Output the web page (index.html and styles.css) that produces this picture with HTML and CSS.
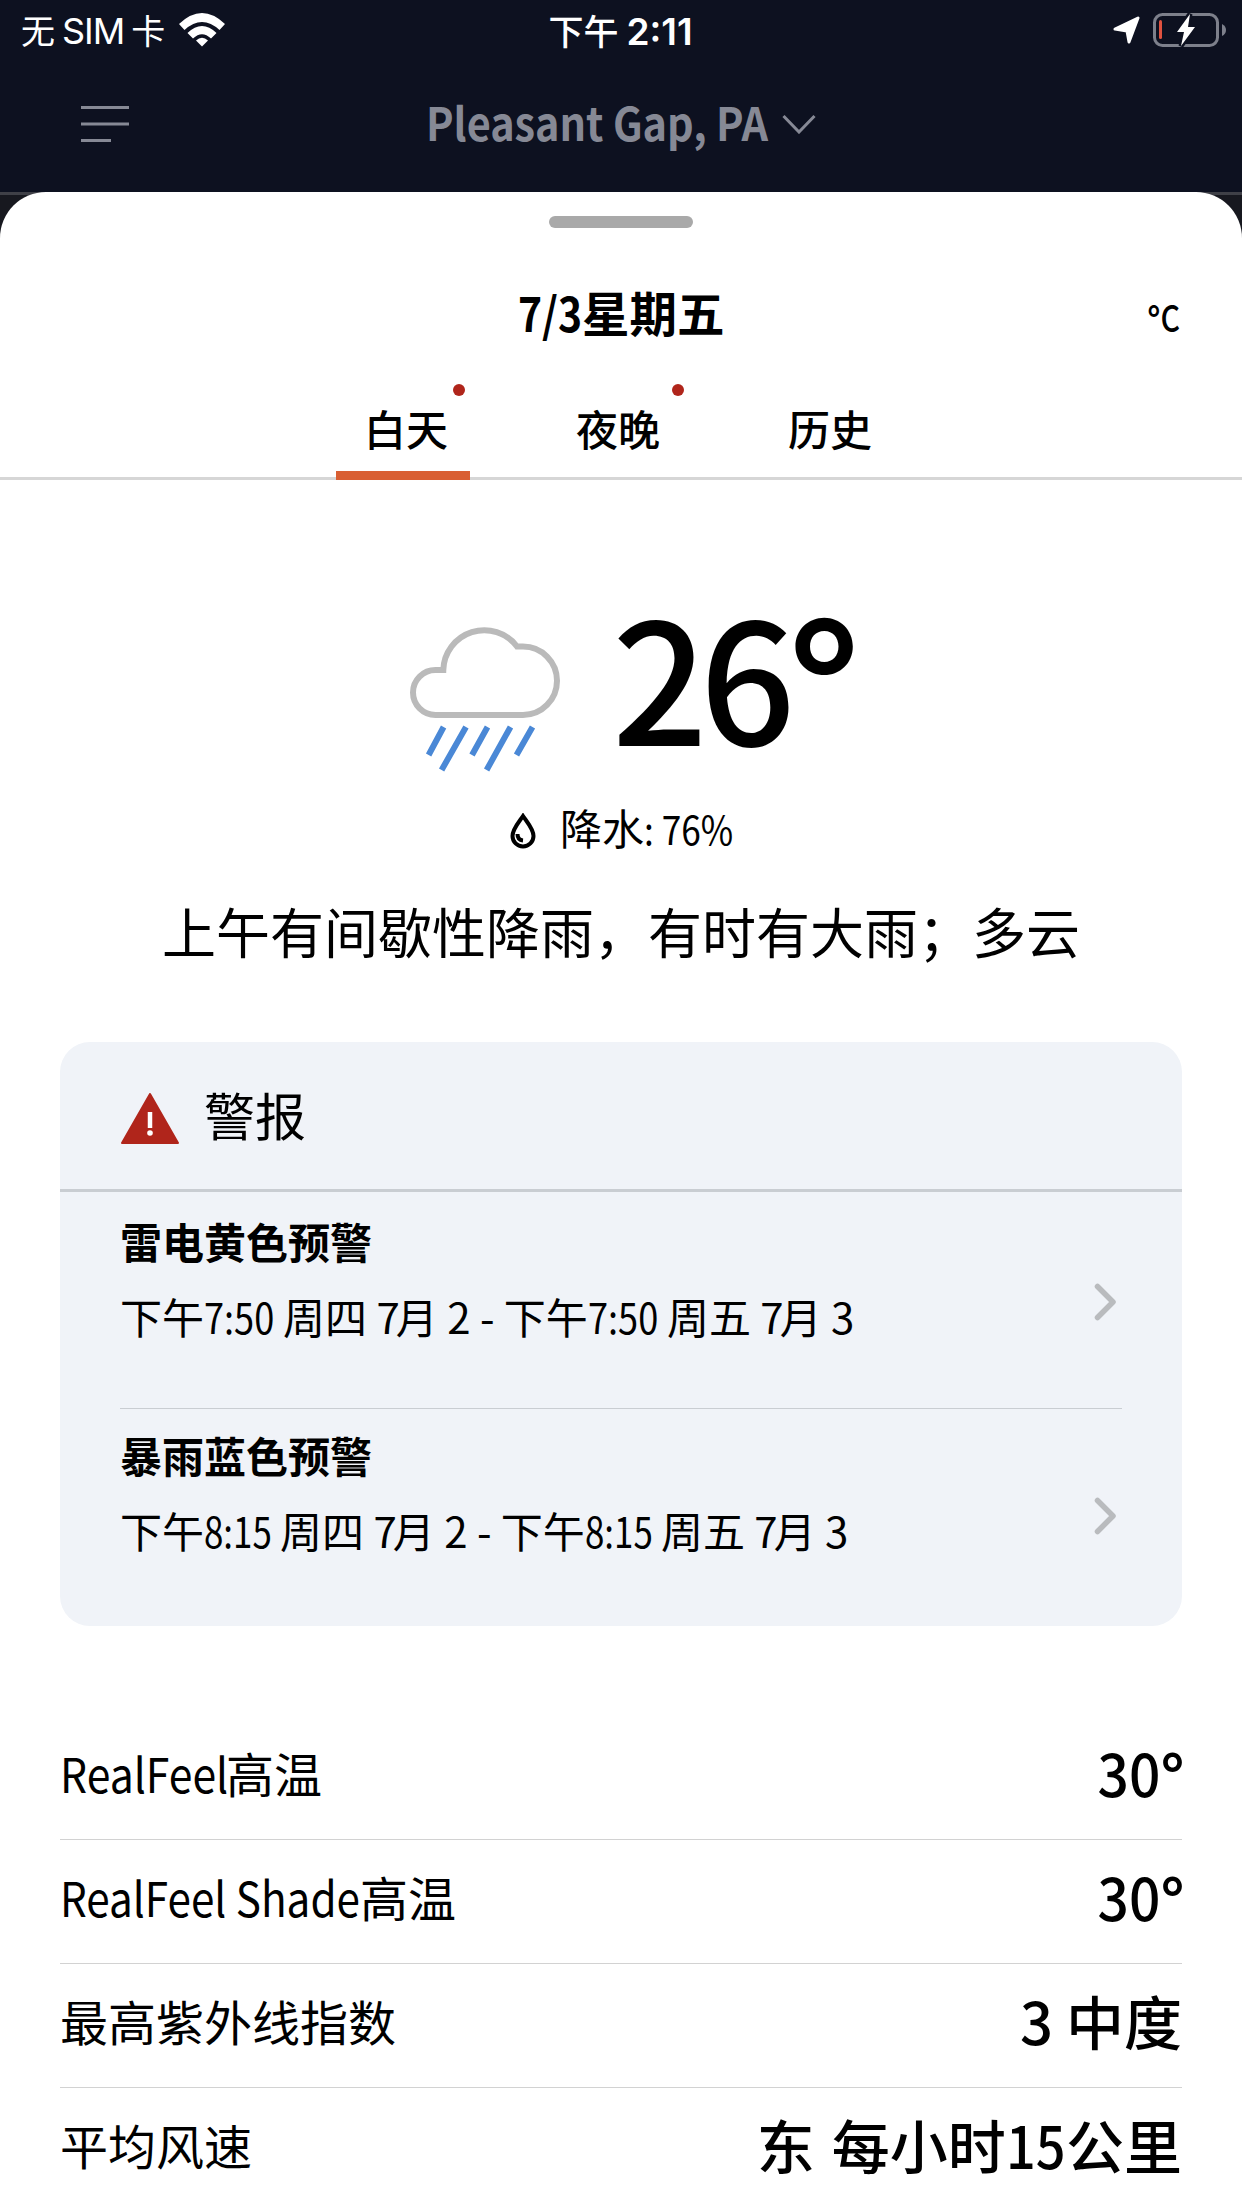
FILE: index.html
```html
<!DOCTYPE html>
<html lang="zh-CN">
<head>
<meta charset="UTF-8">
<meta name="viewport" content="width=device-width, initial-scale=1.0">
<title>Pleasant Gap, PA</title>
<link rel="stylesheet" href="styles.css">
</head>
<body>
<header class="header">
    <div class="status">
        <div class="status-left">
            <span class="carrier">无<span class="carrier-sim">SIM</span>卡</span>
            <svg class="wifi" width="46" height="34" viewBox="0 0 46 34">
                <path d="M0 11Q23 -11 46 11L40.500 17Q23 1 5.500 17Z" fill="#fff"/>
                <path d="M8.500 20Q23 6 37.500 20L32 25.500Q23 17 14 25.500Z" fill="#fff"/>
                <path d="M17 27.500Q23 22 29 27.500L23 33.500Z" fill="#fff"/>
            </svg>
        </div>
        <div class="clock">下午<span class="clock-time">2:11</span></div>
        <div class="status-right">
            <svg class="arrow" width="28" height="28" viewBox="0 0 28 28">
                <path d="M2 13L25 2L16 26L14 15Z" fill="#fff" stroke="#fff" stroke-width="3" stroke-linejoin="round"/>
            </svg>
            <svg width="73" height="34" viewBox="0 0 73 34">
                <rect x="1.500" y="1.500" width="63" height="31" rx="8" fill="none" stroke="#7d808b" stroke-width="3"/>
                <path d="M69 11Q73 13 73 17T69 23Z" fill="#7d808b"/>
                <rect x="6" y="7" width="3" height="19" rx="1.500" fill="#e0523f"/>
                <path class="bolt" d="M37 1L24 19H31L28 33L42 14H35Z" fill="#fff" stroke="#0d1120" stroke-width="5"/>
            </svg>
        </div>
    </div>
    <div class="navbar">
        <svg class="menu" width="48" height="36" viewBox="0 0 48 36">
            <path d="M0 1.500H48M0 18H48M0 34.500H30" stroke="#868995" stroke-width="3"/>
        </svg>
        <div class="location">
            <span class="narrow place">Pleasant Gap, PA</span>
            <svg width="34" height="20" viewBox="0 0 34 20">
                <path d="M1.500 2L17 18L32.500 2" fill="none" stroke="#868995" stroke-width="3"/>
            </svg>
        </div>
    </div>
</header>

<main class="sheet">
    <div class="handle"></div>
    <div class="sheet-head">
        <h1><span class="narrow date">7/3</span>星期五</h1>
        <span class="narrow unit"><span class="degree">°</span>C</span>
    </div>
    <nav class="tabs">
        <div class="tab active">白天<i class="dot"></i></div>
        <div class="tab">夜晚<i class="dot"></i></div>
        <div class="tab">历史</div>
    </nav>

    <section class="current">
        <div class="temp-row">
            <svg class="cloud" width="152" height="146" viewBox="409 627 152 146">
                <path d="M435.500 715A22.500 22.500 0 0 1 435.500 670H443.300A41 41 0 0 1 517 646.500H523A34 34.250 0 0 1 523 715Z" fill="none" stroke="#bababa" stroke-width="6"/>
                <path d="M443.600 727L428.600 755M466 727L441.600 770M487.500 727L472 755M510.500 727L486.600 770M532.500 727L516.500 755" stroke="#4a88d6" stroke-width="6"/>
            </svg>
            <div class="temp">26<span class="degree">°</span></div>
        </div>
        <div class="precip">
            <svg class="drop" width="26" height="36" viewBox="0 0 26 36">
                <path d="M13 3C9 9 2.500 16 2.500 23A10.500 10.500 0 0 0 23.500 23C23.500 16 17 9 13 3Z" fill="none" stroke="#000" stroke-width="4"/>
                <path d="M7.500 21Q7.500 27 13 27.500" fill="none" stroke="#000" stroke-width="4"/>
            </svg>
            <span class="precip-text">降水<span class="narrow precip-value">: 76%</span></span>
        </div>
        <p class="summary">上午有间歇性降雨，有时有大雨；多云</p>
    </section>

    <section class="alerts">
        <div class="alerts-head">
            <svg class="warning" width="58" height="52" viewBox="0 0 58 52">
                <path d="M29 1L57 50H1Z" fill="#b0251b" stroke="#b0251b" stroke-width="2" stroke-linejoin="round"/>
                <path d="M29 19V35" stroke="#fff" stroke-width="4.500"/>
                <circle cx="29" cy="40" r="2.800" fill="#fff"/>
            </svg>
            <h2>警报</h2>
        </div>
        <div class="alert">
            <div>
                <h3>雷电黄色预警</h3>
                <p>下午<span class="narrow time">7:50</span> 周四 <span class="month">7</span>月 2 - 下午<span class="narrow time">7:50</span> 周五 <span class="month">7</span>月 3</p>
            </div>
            <svg class="chevron" width="23" height="38" viewBox="0 0 23 38">
                <path d="M3.500 3.500L19 19L3.500 34.500" fill="none" stroke="#b9bbbe" stroke-width="5.500" stroke-linecap="round" stroke-linejoin="round"/>
            </svg>
        </div>
        <div class="alert">
            <div>
                <h3>暴雨蓝色预警</h3>
                <p>下午<span class="narrow time-short">8:15</span> 周四 <span class="month">7</span>月 2 - 下午<span class="narrow time-short">8:15</span> 周五 <span class="month">7</span>月 3</p>
            </div>
            <svg class="chevron" width="23" height="38" viewBox="0 0 23 38">
                <path d="M3.500 3.500L19 19L3.500 34.500" fill="none" stroke="#b9bbbe" stroke-width="5.500" stroke-linecap="round" stroke-linejoin="round"/>
            </svg>
        </div>
    </section>

    <section class="details">
        <div class="detail"><span><span class="narrow realfeel">RealFeel</span>高温</span><strong class="narrow degrees">30<span class="degree">°</span></strong></div>
        <div class="detail"><span><span class="narrow realfeel-shade">RealFeel Shade</span>高温</span><strong class="narrow degrees">30<span class="degree">°</span></strong></div>
        <div class="detail"><span>最高紫外线指数</span><strong>3 中度</strong></div>
        <div class="detail"><span>平均风速</span><strong class="wind">东 每小时<span class="narrow speed">15</span>公里</strong></div>
    </section>
</main>
</body>
</html>
```
FILE: styles.css
```css
* {
    box-sizing: border-box;
}
body {
    margin: 0;
    width: 1242px;
    height: 2208px;
    overflow: hidden;
    background: #17181f;
    color: #000;
    font-family: "Noto Sans CJK SC", "Noto Sans", sans-serif;
}
h1, h2, h3, p {
    margin: 0;
}
svg {
    display: block;
    flex-shrink: 0;
}

/* condensed latin text and digits */
.narrow {
    display: inline-block;
    transform: scaleX(0.89);
    transform-origin: left center;
}
.degree {
    font-size: 1.08em;
    font-weight: 700;
    line-height: 1;
    vertical-align: -0.07em;
}

/* status bar and location */
.header {
    height: 195px;
    background: #0d1120;
    border-bottom: 3px solid #3f4047;
}
.status {
    display: grid;
    grid-template-columns: 1fr auto 1fr;
    height: 60px;
    padding: 0 16px 0 21px;
    color: #fff;
    font-size: 34px;
    line-height: 60px;
}
.status-left,
.status-right {
    display: flex;
}
.wifi {
    margin: 13px 0 0 14px;
}
.carrier-sim {
    margin: 0 7px;
    font-family: Inter, sans-serif;
    font-size: 36px;
    letter-spacing: -1px;
}
.clock {
    margin-left: -6px;
    font-size: 35px;
    font-weight: 500;
}
.clock-time {
    margin-left: 8px;
    font-family: Inter, sans-serif;
    font-size: 37px;
    font-weight: 600;
}
.status-right {
    justify-content: flex-end;
    gap: 12px;
    padding-top: 13px;
}
.arrow {
    margin-top: 3px;
}
.bolt {
    paint-order: stroke;
}
.navbar {
    display: grid;
    grid-template-columns: 1fr auto 1fr;
    height: 132px;
    padding: 0 81px;
}
.menu {
    margin-top: 46px;
}
.location {
    display: flex;
    align-items: center;
    gap: 14px;
    height: 128px;
    color: #868995;
    font-size: 46px;
    font-weight: 700;
}
.place {
    margin: 0 -38px 6px 0;
    transform: scaleX(0.9);
}

.sheet {
    height: 2016px;
    margin-top: -3px;
    padding-top: 24px;
    background: #fff;
    border-radius: 46px 46px 0 0;
    position: relative;
}
.handle {
    width: 144px;
    height: 12px;
    margin: 0 auto;
    border-radius: 6px;
    background: #a9a9a9;
}
.sheet-head {
    display: grid;
    grid-template-columns: 1fr auto 1fr;
    align-items: center;
    height: 144px;
    padding: 23px 62px 0;
}
h1 {
    grid-column: 2;
    font-size: 47.5px;
    font-weight: 700;
    line-height: 70px;
}
.date {
    margin-right: -10px;
    transform: scaleX(0.86);
}
.unit {
    justify-self: end;
    margin-top: 8px;
    font-size: 36px;
    font-weight: 500;
    transform: scaleX(0.84);
    transform-origin: right center;
}

/* day, night and history tabs */
.tabs {
    display: flex;
    gap: 78px;
    height: 108px;
    padding-left: 336px;
    border-bottom: 3px solid #d6d6d6;
}
.tab {
    position: relative;
    width: 134px;
    height: 108px;
    padding: 24px 0 0 28px;
    font-size: 42px;
    font-weight: 500;
    line-height: 64px;
}
.tab.active {
    border-bottom: 9px solid #d95f33;
}
.dot {
    position: absolute;
    top: 12px;
    right: -2px;
    width: 12px;
    height: 12px;
    border-radius: 50%;
    background: #b0251b;
}
.active .dot {
    right: 5px;
}

.current {
    height: 562px;
}
.temp-row {
    display: flex;
    height: 320px;
    padding: 147px 0 0 409px;
}
.temp {
    margin: -54px 0 0 51px;
    font-size: 168px;
    font-weight: 500;
    line-height: 200px;
    letter-spacing: -8px;
}
.precip {
    display: flex;
    align-items: center;
    gap: 25px;
    height: 60px;
    padding-left: 510px;
    font-size: 42px;
}
.drop {
    margin-top: 1px;
}
.precip-text {
    margin: 0 0 8px -1px;
}
.precip-value {
    font-size: 40px;
    transform: scaleX(0.88);
}
.summary {
    margin-top: 31px;
    text-align: center;
    font-size: 54px;
    line-height: 80px;
}

/* weather alerts */
.alerts {
    height: 584px;
    margin: 0 60px;
    border-radius: 30px;
    background: #f0f3f8;
}
.alerts-head {
    display: flex;
    align-items: center;
    gap: 25px;
    height: 150px;
    padding: 0 61px;
    border-bottom: 3px solid #c9cdd2;
}
.warning {
    margin-top: 6px;
}
h2 {
    margin-bottom: 3px;
    font-size: 51px;
    font-weight: 400;
    line-height: 74px;
}
.alert {
    display: flex;
    justify-content: space-between;
    height: 217px;
    margin: 0 60px;
    padding-top: 18px;
    border-bottom: 1px solid #c9cdd2;
}
.alert:last-child {
    height: 214px;
    padding-top: 15px;
    border-bottom: 0;
}
h3 {
    font-size: 42px;
    font-weight: 700;
    line-height: 62px;
}
.alert p {
    margin-top: 13px;
    font-size: 42px;
    line-height: 62px;
}
.time {
    margin-right: -12px;
    transform: scaleX(0.86);
}
.time-short {
    margin-right: -15px;
    transform: scaleX(0.83);
}
.month {
    letter-spacing: -4px;
}
.chevron {
    margin: 73px 5px 0 0;
}

.details {
    margin: 90px 60px 0;
}
.detail {
    display: flex;
    justify-content: space-between;
    align-items: center;
    height: 124px;
    padding-bottom: 11px;
    border-bottom: 1px solid #d2d2d2;
    font-size: 48px;
}
.realfeel {
    margin-right: -23px;
}
.realfeel-shade {
    margin-right: -41px;
    transform: scaleX(0.88);
}
.detail strong {
    font-size: 58px;
    font-weight: 500;
}
.detail .degrees {
    margin-right: -2px;
    transform: scaleX(0.95);
    transform-origin: right center;
}
.wind {
    word-spacing: 4px;
}
.speed {
    margin-right: -6px;
    transform: scaleX(0.9);
}
```
